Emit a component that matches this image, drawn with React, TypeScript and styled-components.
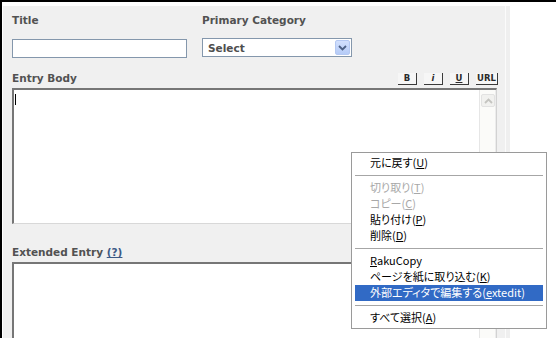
import React from 'react';
import styled, { createGlobalStyle } from 'styled-components';

const Global = createGlobalStyle`
  html, body { margin: 0; padding: 0; background: #fff; }
  body { font-family: "DejaVu Sans", Verdana, sans-serif; }
`;

const Frame = styled.div`
  position: relative;
  width: 556px;
  height: 338px;
  box-sizing: border-box;
  border-top: 2px solid #000;
  border-left: 2px solid #000;
  background: #fff;
  overflow: hidden;
  padding: 4px 0 0 1px;
`;

const Panel = styled.div`
  width: 507px;
  height: 340px;
  box-sizing: border-box;
  background: #f0f0f0;
  padding: 8px 13px 0 9px;
  box-shadow: inset -4px 0 0 #efefef, inset -5px 0 0 #fbfbfb;
`;

const Label = styled.div`
  font-size: 10.5px;
  line-height: 13px;
  height: 13px;
  font-weight: bold;
  color: #525252;
  white-space: nowrap;
`;

const HelpLink = styled.a`
  color: #3d5a86;
  text-decoration: underline;
`;

const FieldGrid = styled.div`
  display: grid;
  grid-template-columns: 175px 150px;
  grid-template-rows: 13px 20px;
  column-gap: 15px;
  row-gap: 11px;
`;

const TextInput = styled.div`
  width: 175px;
  height: 19px;
  margin-top: 1px;
  box-sizing: border-box;
  border: 1px solid #8497ac;
  background: #fff;
`;

const SelectBox = styled.div`
  width: 150px;
  height: 19px;
  box-sizing: border-box;
  border: 1px solid #8497ac;
  background: #fff;
  display: flex;
  align-items: center;
  justify-content: space-between;
  padding-left: 5px;
`;

const SelectText = styled.span`
  font-size: 10.5px;
  font-weight: bold;
  color: #4e4e4e;
`;

const DropButton = styled.div`
  width: 15px;
  height: 15px;
  margin-right: 1px;
  box-sizing: border-box;
  border: 1px solid #b4c8f2;
  border-radius: 2px;
  background: linear-gradient(#d2e0fd, #b5cbf7);
  display: flex;
  align-items: center;
  justify-content: center;
`;

const EntryHead = styled.div`
  margin-top: 14px;
  height: 13px;
  display: flex;
  align-items: center;
  justify-content: space-between;
`;

const FmtBar = styled.div`
  display: flex;
  gap: 7px;
  margin-right: -1px;
  padding-top: 1px;
`;

const FmtButton = styled.div<{ $w: number; $italic?: boolean; $under?: boolean }>`
  width: ${(p) => p.$w}px;
  height: 12px;
  box-sizing: border-box;
  background: #f6f6f6;
  border-right: 1px solid #3a3a3a;
  border-bottom: 1px solid #3a3a3a;
  font-family: "DejaVu Sans", Verdana, sans-serif;
  font-size: 8.5px;
  font-weight: bold;
  line-height: 11px;
  text-align: center;
  color: #2a2a2a;
  font-style: ${(p) => (p.$italic ? 'italic' : 'normal')};
  text-decoration: ${(p) => (p.$under ? 'underline' : 'none')};
`;

const TextBox = styled.div<{ $h: number; $top: number }>`
  margin-top: ${(p) => p.$top}px;
  width: 485px;
  height: ${(p) => p.$h}px;
  box-sizing: border-box;
  background: #fff;
  border-top: 2px solid #767676;
  border-left: 2px solid #767676;
  border-right: 1px solid #d2d2d2;
  border-bottom: 1px solid #d8d8d8;
  display: flex;
`;

const TextArea = styled.div`
  flex: 1;
  padding: 4px 0 0 1px;
`;

const Caret = styled.div`
  width: 1px;
  height: 11px;
  background: #000;
`;

const ScrollTrack = styled.div`
  width: 17px;
  box-sizing: border-box;
  border-left: 1px solid #e6e6e6;
  border-right: 1px solid #ececec;
  background: #fbfbf9;
  padding: 4px 0 0 1px;
`;

const ScrollUp = styled.div`
  width: 14px;
  height: 13px;
  box-sizing: border-box;
  border: 1px solid #e2e2e2;
  border-radius: 2px;
  background: #f1f1ef;
  display: flex;
  align-items: center;
  justify-content: center;
`;

const ExtHead = styled.div`
  margin-top: 22px;
`;

const Menu = styled.div`
  position: absolute;
  left: 349px;
  top: 150px;
  width: 196px;
  height: 177px;
  box-sizing: border-box;
  border: 1px solid #9a9a9a;
  background: #fff;
  padding: 2px 3px;
  font-family: "Noto Sans CJK JP", "DejaVu Sans", sans-serif;
  font-size: 11px;
  font-feature-settings: "palt";
`;

const MenuItem = styled.div<{ $disabled?: boolean; $active?: boolean }>`
  height: 16px;
  line-height: 15px;
  padding-left: 15px;
  white-space: nowrap;
  color: ${(p) => (p.$active ? '#fff' : p.$disabled ? '#a8a8a8' : '#000')};
  background: ${(p) => (p.$active ? '#316ac5' : 'transparent')};
`;

const MenuSep = styled.div`
  height: 1px;
  margin: 4px 0;
  background: #a6a6a6;
`;

const Chevron = ({ color, up }: { color: string; up?: boolean }) => (
  <svg width="9" height="6" viewBox="0 0 9 6">
    <path
      d={up ? 'M1 5 L4.5 1.5 L8 5' : 'M1 1 L4.5 4.5 L8 1'}
      fill="none"
      stroke={color}
      strokeWidth="1.8"
    />
  </svg>
);

const Scrollbar = ({ showUp }: { showUp?: boolean }) => (
  <ScrollTrack>
    {showUp && (
      <ScrollUp>
        <Chevron color="#c4c4c0" up />
      </ScrollUp>
    )}
  </ScrollTrack>
);

export default function App() {
  return (
    <>
      <Global />
      <Frame>
        <Panel>
          <FieldGrid>
            <Label>Title</Label>
            <Label>Primary Category</Label>
            <TextInput />
            <SelectBox>
              <SelectText>Select</SelectText>
              <DropButton>
                <Chevron color="#4d6185" />
              </DropButton>
            </SelectBox>
          </FieldGrid>

          <EntryHead>
            <Label>Entry Body</Label>
            <FmtBar>
              <FmtButton $w={19}>B</FmtButton>
              <FmtButton $w={19} $italic>i</FmtButton>
              <FmtButton $w={19} $under>U</FmtButton>
              <FmtButton $w={22}>URL</FmtButton>
            </FmtBar>
          </EntryHead>
          <TextBox $h={136} $top={3}>
            <TextArea>
              <Caret />
            </TextArea>
            <Scrollbar showUp />
          </TextBox>

          <ExtHead>
            <Label>
              Extended Entry <HelpLink>(?)</HelpLink>
            </Label>
          </ExtHead>
          <TextBox $h={100} $top={3}>
            <TextArea />
            <Scrollbar showUp />
          </TextBox>
        </Panel>

        <Menu>
          <MenuItem>元に戻す(<u>U</u>)</MenuItem>
          <MenuSep />
          <MenuItem $disabled>切り取り(<u>T</u>)</MenuItem>
          <MenuItem $disabled>コピー(<u>C</u>)</MenuItem>
          <MenuItem>貼り付け(<u>P</u>)</MenuItem>
          <MenuItem>削除(<u>D</u>)</MenuItem>
          <MenuSep />
          <MenuItem><u>R</u>akuCopy</MenuItem>
          <MenuItem>ページを紙に取り込む(<u>K</u>)</MenuItem>
          <MenuItem $active>外部エディタで編集する(<u>e</u>xtedit)</MenuItem>
          <MenuSep />
          <MenuItem>すべて選択(<u>A</u>)</MenuItem>
        </Menu>
      </Frame>
    </>
  );
}
